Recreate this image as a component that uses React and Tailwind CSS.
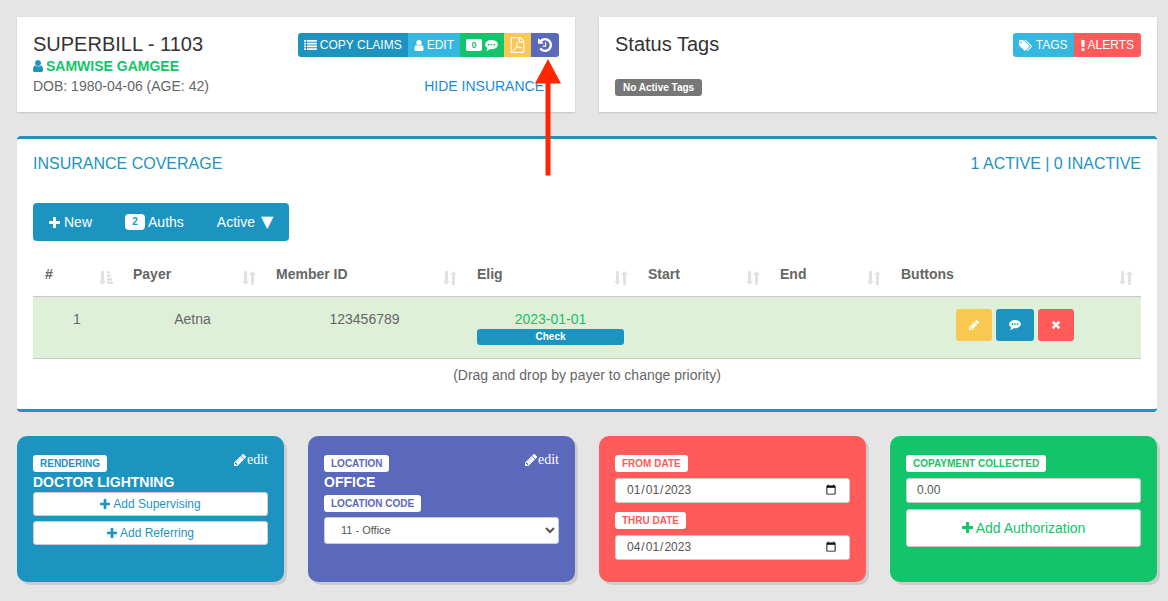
import React from 'react';

const GLYPHS = {
  plus: {
    box: '192 128 1408 1408',
    d: 'M1600 736v192q0 40-28 68t-68 28h-416v416q0 40-28 68t-68 28h-192q-40 0-68-28t-28-68v-416h-416q-40 0-68-28t-28-68v-192q0-40 28-68t68-28h416v-416q0-40 28-68t68-28h192q40 0 68 28t28 68v416h416q40 0 68 28t28 68z',
  },
  times: {
    box: '302 366 1188 1188',
    d: 'M1490 1322q0 40-28 68l-136 136q-28 28-68 28t-68-28l-294-294-294 294q-28 28-68 28t-68-28l-136-136q-28-28-28-68t28-68l294-294-294-294q-28-28-28-68t28-68l136-136q28-28 68-28t68 28l294 294 294-294q28-28 68-28t68 28l136 136q28 28 28 68t-28 68l-294 294 294 294q28 28 28 68z',
  },
  pencil: {
    box: '128 149 1515 1515',
    d: 'M491 1536l91-91-235-235-91 91v107h128v128h107zm523-928q0-22-22-22-10 0-17 7l-542 542q-7 7-7 17 0 22 22 22 10 0 17-7l542-542q7-7 7-17zm-54-192l416 416-832 832h-416v-416zm683 96q0 53-37 90l-166 166-416-416 166-165q36-38 90-38 53 0 91 38l235 234q37 39 37 91z',
  },
  user: {
    box: '256 128 1280 1536',
    d: 'M1536 1399q0 109-62.5 187t-150.5 78h-854q-88 0-150.5-78t-62.5-187q0-85 8.5-160.5t31.5-152 58.5-131 94-89 134.5-34.5q131 128 313 128t313-128q76 0 134.5 34.5t94 89 58.5 131 31.5 152 8.5 160.5zm-256-887q0 159-112.5 271.5t-271.5 112.5-271.5-112.5-112.5-271.5 112.5-271.5 271.5-112.5 271.5 112.5 112.5 271.5z',
  },
  list: {
    box: '0 128 1792 1408',
    d: 'M0 128h256v256h-256zM384 128h1408v256h-1408zM0 512h256v256h-256zM384 512h1408v256h-1408zM0 896h256v256h-256zM384 896h1408v256h-1408zM0 1280h256v256h-256zM384 1280h1408v256h-1408z',
  },
  comment: {
    box: '0 256 1792 1536',
    d: 'M640 896q0-53-37.5-90.5t-90.5-37.5-90.5 37.5-37.5 90.5 37.5 90.5 90.5 37.5 90.5-37.5 37.5-90.5zm384 0q0-53-37.5-90.5t-90.5-37.5-90.5 37.5-37.5 90.5 37.5 90.5 90.5 37.5 90.5-37.5 37.5-90.5zm384 0q0-53-37.5-90.5t-90.5-37.5-90.5 37.5-37.5 90.5 37.5 90.5 90.5 37.5 90.5-37.5 37.5-90.5zm384 0q0 174-120 321.5t-326 233-450 85.5q-110 0-211-18-173 173-435 229-52 10-86 13-12 1-22-6t-13-18q-4-15 20-37 5-5 23.5-21.5t25.5-23.5 23.5-25.5 24-31.5 20.5-37 20-48 14.5-57.5 12.5-72.5q-146-90-229.5-216.5t-83.5-269.5q0-174 120-321.5t326-233 450-85.5 450 85.5 326 233 120 321.5z',
  },
  tags: {
    box: '0 128 1835 1536',
    d: 'M384 448q0-53-37.5-90.5t-90.5-37.5-90.5 37.5-37.5 90.5 37.5 90.5 90.5 37.5 90.5-37.5 37.5-90.5zm1067 576q0 53-37 90l-491 492q-39 37-91 37-53 0-90-37l-715-716q-38-37-64.5-101t-26.5-117v-416q0-52 38-90t90-38h416q53 0 117 26.5t102 64.5l715 714q37 39 37 91zm384 0q0 53-37 90l-491 492q-39 37-91 37-36 0-59-14t-53-45l470-470q37-37 37-90 0-52-37-91l-715-714q-38-38-102-64.5t-117-26.5h224q53 0 117 26.5t102 64.5l715 714q37 39 37 91z',
  },
  exclamation: {
    box: '674 128 444 1408',
    d: 'M1088 1248v224q0 26-19 45t-45 19h-256q-26 0-45-19t-19-45v-224q0-26 19-45t45-19h256q26 0 45 19t19 45zm30-1056l-28 768q-1 26-20.5 45t-45.5 19h-256q-26 0-45.5-19t-20.5-45l-28-768q-1-26 17.5-45t44.5-19h320q26 0 44.5 19t17.5 45z',
  },
  history: {
    box: '128 128 1536 1536',
    d: 'M1664 896q0 156-61 298t-164 245-245 164-298 61q-172 0-327-72.5t-264-204.5q-7-10-6.5-22.5t8.5-20.5l137-138q10-9 25-9 16 2 23 12 73 95 179 147t225 52q104 0 198.5-40.5t163.5-109.5 109.5-163.5 40.5-198.5-40.5-198.5-109.5-163.5-163.5-109.5-198.5-40.5q-98 0-188 35.5t-160 101.5l137 138q31 30 14 69-17 40-59 40h-448q-26 0-45-19t-19-45v-448q0-42 40-59 39-17 69 14l130 129q107-101 244.5-156.5t284.5-55.5q156 0 298 61t245 164 164 245 61 298zm-640-288v448q0 14-9 23t-23 9h-320q-14 0-23-9t-9-23v-64q0-14 9-23t23-9h224v-352q0-14 9-23t23-9h64q14 0 23 9t9 23z',
  },
  pdf: {
    box: '128 0 1536 1792',
    d: 'M1596 380q28 28 48 76t20 88v1152q0 40-28 68t-68 28h-1344q-40 0-68-28t-28-68v-1600q0-40 28-68t68-28h896q40 0 88 20t76 48zm-444-244v376h376q-10-29-22-41l-313-313q-12-12-41-22zm384 1528v-1024h-416q-40 0-68-28t-28-68v-416h-768v1536h1280zm-514-593q33 26 84 56 59-7 117-7 147 0 177 49 16 22 2 52 0 1-1 2l-2 2v1q-6 38-71 38-48 0-115-20t-130-53q-221 24-392 83-153 262-242 262-15 0-28-7l-24-12q-1-1-6-5-10-10-6-36 9-40 56-91.5t132-96.5q14-9 23 6 2 2 2 4 52-85 107-197 68-136 104-262-24-82-30.5-159.5t6.5-127.5q11-40 42-40h22q23 0 35 15 18 21 9 68-2 6-4 8 1 3 1 8v30q-2 123-14 192 55 164 146 238zm-576 411q52-24 137-158-51 40-87.5 84t-49.5 74zm398-920q-15 42-2 132 1-7 7-44 0-3 7-43 1-4 4-8-1-1-1-2-1-2-1-3-1-22-13-36 0 1-1 2v2zm-124 661q135-54 284-81-2-1-13-9.5t-16-13.5q-76-67-127-176-27 86-83 197-30 56-45 83zm646-16q-24-24-140-24 76 28 124 28 14 0 18-1 0-1-2-3z',
  },
  sort: {
    box: '0 0 14 14',
    d: 'M2 0h3v10h2l-3.5 4l-3.5-4h2zM9 14h3v-10h2l-3.500-4l-3.500 4h2z',
  },
  sortAsc: {
    box: '0 0 14 14',
    d: 'M2 0h3v10h2l-3.5 4l-3.5-4h2zM8 0h3v2.500h-3zM8 3.500h4v2.500h-4zM8 7h5v2.500h-5zM8 10.500h6v2.500h-6z',
  },
};

function Icon({ name, className }) {
  const { box, d } = GLYPHS[name];
  return (
    <svg viewBox={box} className={`shrink-0 fill-current ${className}`} aria-hidden="true">
      <path d={d} />
    </svg>
  );
}

function Segment({ className, label, children }) {
  return (
    <button type="button" aria-label={label} className={`flex h-6 items-center text-xs text-white ${className}`}>
      {children}
    </button>
  );
}

function Tag({ as: As = 'span', className, ...rest }) {
  return (
    <As
      className={`block w-fit rounded-[3px] bg-white px-[7px] text-[10px]/[17px] font-bold ${className}`}
      {...rest}
    />
  );
}

function Tile({ className, edit, children }) {
  return (
    <section className={`relative rounded-[10px] px-4 pt-[19px] pb-[22px] shadow-[3px_3px_0_#cccccc] ${className}`}>
      {edit && (
        <a href="#edit" className="absolute top-3.5 right-4 flex items-center gap-px font-['Liberation_Serif',serif] text-sm text-white">
          <Icon name="pencil" className="size-3" />
          edit
        </a>
      )}
      {children}
    </section>
  );
}

const COLUMNS = [
  { title: '#', width: 'w-[88px]', sort: 'sortAsc' },
  { title: 'Payer', width: 'w-[143px]', sort: 'sort' },
  { title: 'Member ID', width: 'w-[201px]', sort: 'sort' },
  { title: 'Elig', width: 'w-[171px]', sort: 'sort' },
  { title: 'Start', width: 'w-[132px]', sort: 'sort' },
  { title: 'End', width: 'w-[121px]', sort: 'sort' },
  { title: 'Buttons', width: 'w-[252px]', sort: 'sort' },
];

const FIELD = 'block h-[25px] w-full rounded-[3px] border border-[#cccccc] bg-white px-2.5 text-xs text-[#555555]';

function Coverage() {
  return (
    <section className="rounded border-y-[3px] border-[#1c94bf] bg-white px-4 pt-3.5 pb-6">
      <div className="flex items-center justify-between text-base/[22px] text-[#1c94bf]">
        <h2>INSURANCE COVERAGE</h2>
        <p>1 ACTIVE | 0 INACTIVE</p>
      </div>
      <div className="mt-7 flex h-[38px] w-fit gap-px rounded bg-[#1c94bf] text-sm text-white">
        <button type="button" className="flex items-center gap-1 px-4">
          <Icon name="plus" className="size-[11px]" />
          New
        </button>
        <button type="button" className="flex items-center gap-[3px] px-4">
          <span className="w-5 rounded-sm bg-white text-center text-[10px]/4 font-bold text-[#1c94bf]">2</span>
          Auths
        </button>
        <button type="button" className="flex items-center gap-1.5 px-4">
          Active
          <span className="font-['DejaVu_Sans',sans-serif] text-base">▼</span>
        </button>
      </div>
      <table className="mt-3 w-full table-fixed border-collapse">
        <thead>
          <tr className="border-b border-[#c8c8c8]">
            {COLUMNS.map((c) => (
              <th key={c.title} className={`h-[43px] px-3 text-left font-bold ${c.width}`}>
                <span className="relative block">
                  {c.title}
                  <Icon name={c.sort} className="absolute -right-1 -bottom-px size-3.5 text-[#e2e2e2]" />
                </span>
              </th>
            ))}
          </tr>
        </thead>
        <tbody>
          <tr className="border-b border-[#c8c8c8] bg-[#dff0d8] text-center align-top">
            <td className="px-3 pt-3">1</td>
            <td className="px-3 pt-3">Aetna</td>
            <td className="px-3 pt-3">123456789</td>
            <td className="px-3 pt-3 pb-[13px] text-[#14c46a]">
              2023-01-01
              <button type="button" className="block w-full rounded-[3px] bg-[#1c94bf] text-[10px]/4 font-bold text-white">
                Check
              </button>
            </td>
            <td />
            <td />
            <td className="px-3 pt-3">
              <div className="flex justify-center gap-1 text-white">
                <button type="button" aria-label="Edit coverage" className="flex h-8 w-9 items-center justify-center rounded-[3px] bg-[#f9c851]">
                  <Icon name="pencil" className="size-2.5" />
                </button>
                <button type="button" aria-label="Notes" className="flex h-8 w-[38px] items-center justify-center rounded-[3px] bg-[#1c94bf]">
                  <Icon name="comment" className="h-2.5 w-3" />
                </button>
                <button type="button" aria-label="Remove coverage" className="flex h-8 w-9 items-center justify-center rounded-[3px] bg-[#ff5b5b]">
                  <Icon name="times" className="size-2" />
                </button>
              </div>
            </td>
          </tr>
        </tbody>
      </table>
      <p className="mt-1.5 text-center">(Drag and drop by payer to change priority)</p>
    </section>
  );
}

export default function App() {
  return (
    <main className="flex min-h-screen flex-col gap-6 bg-[#e5e5e5] pt-[17px] pr-[11px] pb-[19px] pl-[17px] font-['Liberation_Sans',Arial,sans-serif] text-sm/5 text-[#666666]">
      <div className="grid grid-cols-2 gap-6">
        <section className="flex justify-between bg-white p-4 shadow-[0_1px_2px_rgba(0,0,0,0.15)]">
          <div>
            <h1 className="text-xl/[23px] text-[#333333]">SUPERBILL - 1103</h1>
            <p className="flex items-center gap-[3px] font-bold text-[#14c46a]">
              <Icon name="user" className="h-3 w-2.5 text-[#1c94bf]" />
              SAMWISE GAMGEE
            </p>
            <p>DOB: 1980-04-06 (AGE: 42)</p>
          </div>
          <div className="flex flex-col items-end justify-between">
            <div className="relative flex">
              <Segment className="gap-[3px] rounded-l-[3px] bg-[#1c94bf] px-1.5">
                <Icon name="list" className="h-2.5 w-[13px]" />
                COPY CLAIMS
              </Segment>
              <Segment className="gap-[3px] bg-[#35b8e0] px-1.5">
                <Icon name="user" className="h-[11px] w-2.5" />
                EDIT
              </Segment>
              <Segment label="Notes" className="gap-[3px] bg-[#14c46a] px-1.5">
                <span className="w-4 rounded-xs bg-white text-center text-[9px]/3 font-bold text-[#14c46a]">0</span>
                <Icon name="comment" className="h-[11px] w-[13px]" />
              </Segment>
              <Segment label="PDF" className="bg-[#f9c851] px-1.5">
                <Icon name="pdf" className="h-4 w-[15px]" />
              </Segment>
              <Segment label="History" className="rounded-r-[3px] bg-[#5b69bc] px-[7px]">
                <Icon name="history" className="size-3.5" />
              </Segment>
              <svg viewBox="0 0 26 117" className="pointer-events-none absolute top-full -right-0.5 z-10 h-[117px] w-[26px] translate-y-0.5 fill-[#ff2600]" aria-hidden="true">
                <path d="M13 0L26 24.500H15.500V116.500H10.500V24.500H0z" />
              </svg>
            </div>
            <a href="#insurance" className="pr-[15px] text-[#188ae2]">HIDE INSURANCE</a>
          </div>
        </section>
        <section className="flex flex-col justify-between bg-white p-4 shadow-[0_1px_2px_rgba(0,0,0,0.15)]">
          <div className="flex items-start justify-between">
            <h2 className="text-xl/[23px] text-[#333333]">Status Tags</h2>
            <div className="flex">
              <Segment className="gap-1 rounded-l-[3px] bg-[#35b8e0] px-1.5">
                <Icon name="tags" className="h-[11px] w-[13px]" />
                TAGS
              </Segment>
              <Segment className="gap-[3px] rounded-r-[3px] bg-[#ff5b5b] px-[7px]">
                <Icon name="exclamation" className="h-[11px] w-1" />
                ALERTS
              </Segment>
            </div>
          </div>
          <span className="w-fit rounded-[3px] bg-[#777777] px-2 text-[10px]/[17px] font-bold text-white">No Active Tags</span>
        </section>
      </div>

      <Coverage />

      <div className="grid grid-cols-4 gap-6">
        <Tile edit className="bg-[#1c94bf] text-[#1c94bf]">
          <Tag>RENDERING</Tag>
          <p className="font-bold text-white">DOCTOR LIGHTNING</p>
          <div className="flex flex-col gap-[5px]">
            {['Add Supervising', 'Add Referring'].map((text) => (
              <button key={text} type="button" className="flex h-6 items-center justify-center gap-[3px] rounded-[3px] border border-[#cccccc] bg-white text-xs">
                <Icon name="plus" className="size-2.5" />
                {text}
              </button>
            ))}
          </div>
        </Tile>
        <Tile edit className="bg-[#5b69bc] text-[#5b69bc]">
          <Tag>LOCATION</Tag>
          <p className="font-bold text-white">OFFICE</p>
          <Tag as="label" htmlFor="location-code" className="mt-[3px]">LOCATION CODE</Tag>
          <select id="location-code" className="mt-[5px] block h-[27px] w-full rounded-[3px] border border-[#cccccc] bg-white pl-3 text-[11px] text-[#555555]">
            <option>11 - Office</option>
          </select>
        </Tile>
        <Tile className="bg-[#ff5b5b] text-[#ff5b5b]">
          <Tag as="label" htmlFor="from-date">FROM DATE</Tag>
          <input id="from-date" type="date" defaultValue="2023-01-01" className={`mt-1.5 ${FIELD}`} />
          <Tag as="label" htmlFor="thru-date" className="mt-[9px]">THRU DATE</Tag>
          <input id="thru-date" type="date" defaultValue="2023-04-01" className={`mt-1.5 ${FIELD}`} />
        </Tile>
        <Tile className="bg-[#14c46a] text-[#14c46a]">
          <Tag as="label" htmlFor="copayment">COPAYMENT COLLECTED</Tag>
          <input id="copayment" type="text" defaultValue="0.00" className={`mt-1.5 ${FIELD}`} />
          <button type="button" className="mt-1.5 flex h-[38px] w-full items-center justify-center gap-[3px] rounded-[3px] border border-[#cccccc] bg-white text-sm">
            <Icon name="plus" className="size-[11px]" />
            Add Authorization
          </button>
        </Tile>
      </div>
    </main>
  );
}
